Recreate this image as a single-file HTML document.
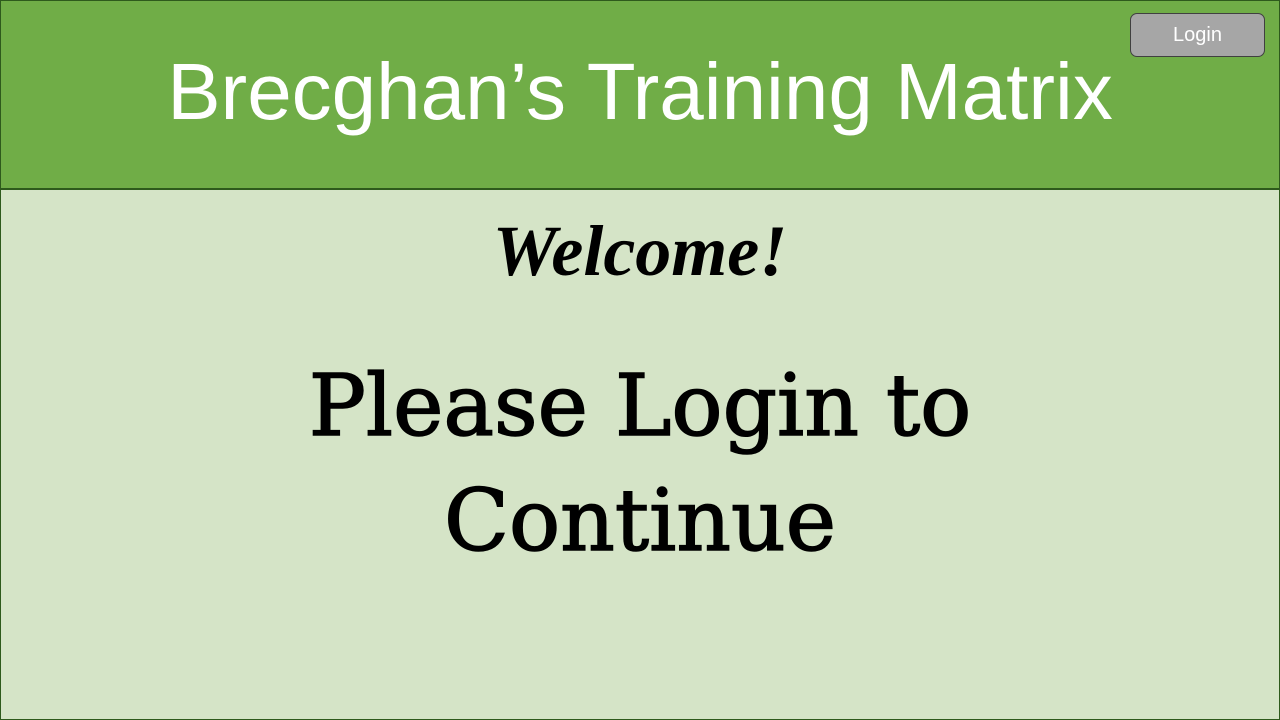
<!DOCTYPE html>
<html><head><style>
html,body{margin:0;padding:0;width:1280px;height:720px;overflow:hidden}
body{background:#d5e4c7;position:relative;font-family:"Liberation Sans",sans-serif}
.frame{position:absolute;left:0;top:0;width:1278px;height:718px;border:1px solid #2e5a1c}
.hdr{position:absolute;left:0;top:0;width:1280px;height:188px;background:#70ad47;border-bottom:2px solid #2e5a1c}
.title{position:absolute;left:0;width:1280px;top:47px;text-align:center;color:#fff;font-size:80px;line-height:90px;white-space:nowrap}
.btn{position:absolute;left:1130px;top:13px;width:133px;height:42px;background:#a6a6a6;border:1px solid #404040;border-radius:7px;color:#fff;font-size:20px;text-align:center;line-height:42px}
.wel{position:absolute;left:0;width:1280px;top:206px;text-align:center;font-family:"Liberation Serif",serif;font-style:italic;font-weight:bold;font-size:72px;line-height:90px;color:#000}
.msg{position:absolute;left:0;width:1280px;top:349px;text-align:center;font-family:"DejaVu Serif","Liberation Serif",serif;font-size:85px;line-height:115px;color:#000;-webkit-text-stroke:1.5px #000}
</style></head><body>
<div class="hdr"><div class="title">Brecghan’s Training Matrix</div></div>
<div class="btn">Login</div>
<div class="wel">Welcome!</div>
<div class="msg">Please Login to<br>Continue</div>
<div class="frame"></div>
</body></html>
